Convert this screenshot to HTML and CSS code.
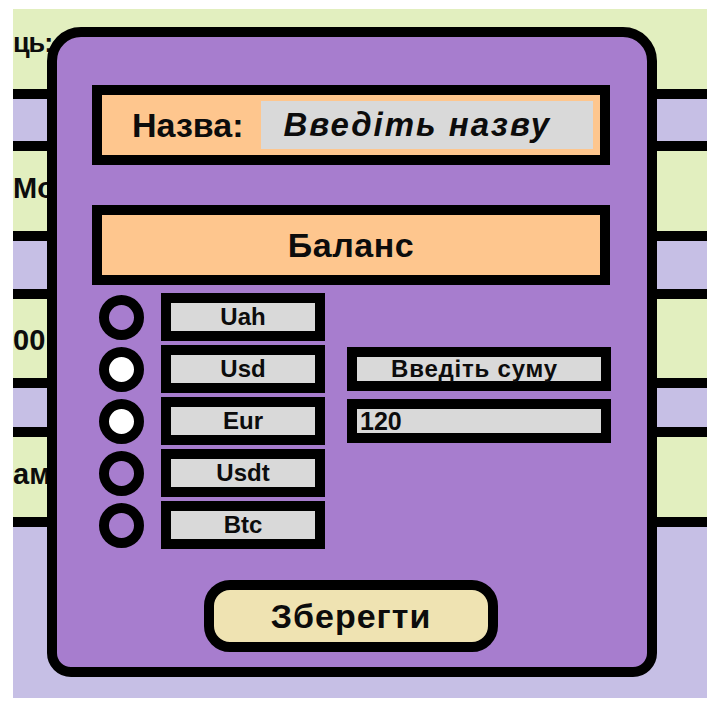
FILE: index.html
```html
<!DOCTYPE html>
<html lang="uk">
<head>
<meta charset="utf-8">
<title>Гаманець</title>
<link rel="stylesheet" href="styles.css">
</head>
<body>
<div class="sheet">
  <div class="band green"><span class="cell-text first">ць:</span></div>
  <div class="band lav"></div>
  <div class="band green"><span class="cell-text">Mo</span></div>
  <div class="band lav"></div>
  <div class="band green"><span class="cell-text low">00</span></div>
  <div class="band lav"></div>
  <div class="band green"><span class="cell-text">ам</span></div>
  <div class="band lav last"></div>

  <div class="modal">
    <div class="panel name-panel">
      <span class="label">Назва:</span>
      <div class="name-input">Введіть назву</div>
    </div>

    <div class="panel balance-panel">Баланс</div>

    <div class="currencies">
      <span class="radio"></span>
      <div class="cur">Uah</div>
      <span class="spacer"></span>

      <span class="radio checked"></span>
      <div class="cur">Usd</div>
      <div class="amount center-text">Введіть суму</div>

      <span class="radio checked"></span>
      <div class="cur">Eur</div>
      <div class="amount">120</div>

      <span class="radio"></span>
      <div class="cur">Usdt</div>
      <span class="spacer"></span>

      <span class="radio"></span>
      <div class="cur">Btc</div>
      <span class="spacer"></span>
    </div>

    <button class="save">Зберегти</button>
  </div>
</div>
</body>
</html>
```

FILE: styles.css
```css
* { box-sizing: border-box; }

html, body {
  margin: 0;
  padding: 0;
  background: #ffffff;
}

body {
  font-family: "Liberation Sans", Arial, sans-serif;
  font-weight: 700;
  color: #0c0c0c;
  padding: 9px 7px 8px 13px;
}

.sheet {
  position: relative;
  width: 694px;
  height: 689px;
  overflow: hidden;
  display: grid;
  grid-template-rows: 90px 52px 90px 58px 89px 49px 90px 1fr;
}

.band {
  border-bottom: 10px solid #000;
  display: flex;
  align-items: center;
}

.band.last { border-bottom: 0; }

.green { background: #e2efbf; }
.lav { background: #c6bfe5; }

.cell-text {
  font-size: 29px;
  line-height: 1;
  margin-top: -6px;
}

.cell-text.first {
  font-size: 27px;
  margin-top: -12px;
  letter-spacing: -1px;
}

.cell-text.low { margin-top: 4px; }

.modal {
  position: absolute;
  left: 34px;
  top: 18px;
  width: 610px;
  height: 650px;
  background: #a77dce;
  border: 10px solid #000;
  border-radius: 34px 34px 24px 24px;
  padding: 48px 37px 15px 35px;
  display: flex;
  flex-direction: column;
}

.panel {
  height: 80px;
  border: 10px solid #000;
  background: #fec68e;
  display: flex;
  align-items: center;
  font-size: 34px;
}

.name-panel {
  padding: 0 7px 0 30px;
  gap: 18px;
}

.name-input {
  flex: 1;
  height: 48px;
  background: #d9d9d9;
  display: flex;
  align-items: center;
  padding-left: 22px;
  font-style: italic;
  font-size: 33px;
  letter-spacing: 2px;
}

.balance-panel {
  margin-top: 40px;
  justify-content: center;
  letter-spacing: 0.5px;
}

.currencies {
  margin-top: 8px;
  margin-left: 7px;
  display: grid;
  grid-template-columns: 45px 164px 269px;
  grid-auto-rows: 48px;
  column-gap: 17px;
  row-gap: 4px;
  align-items: center;
}

.radio {
  display: block;
  width: 45px;
  height: 45px;
  border: 10px solid #000;
  border-radius: 50%;
}

.radio.checked { background: #ffffff; }

.cur {
  height: 48px;
  border: 10px solid #000;
  background: #d9d9d9;
  display: flex;
  align-items: center;
  justify-content: center;
  font-size: 24px;
}

.amount {
  margin-left: 5px;
  height: 44px;
  border: 10px solid #000;
  background: #d9d9d9;
  display: flex;
  align-items: center;
  padding-left: 3px;
  font-size: 25px;
}

.amount.center-text {
  justify-content: center;
  padding-right: 12px;
  font-size: 24px;
  letter-spacing: 0.8px;
}

.save {
  margin-top: 31px;
  align-self: center;
  width: 294px;
  height: 72px;
  border: 10px solid #000;
  border-radius: 26px;
  background: #efe3b2;
  font-family: "Liberation Sans", Arial, sans-serif;
  font-weight: 700;
  font-size: 34px;
  letter-spacing: 1px;
  color: #0c0c0c;
  padding: 0;
}
```
